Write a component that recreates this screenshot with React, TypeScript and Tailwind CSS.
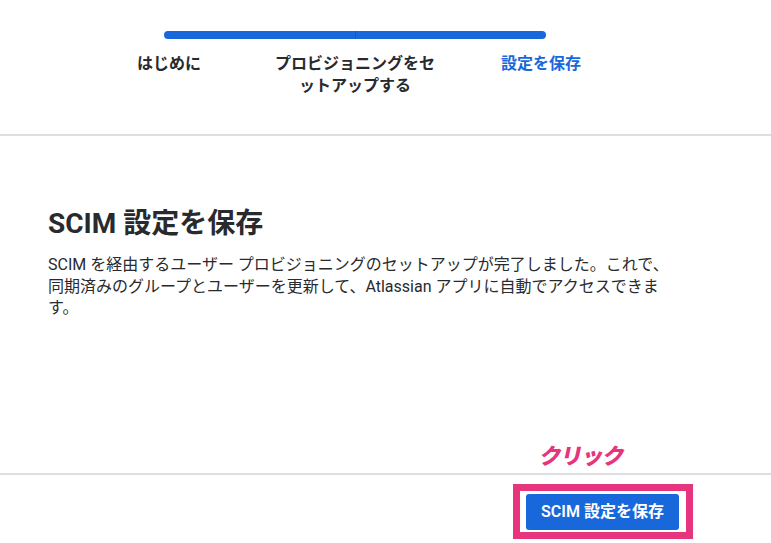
import React from 'react'

const steps = [
  { label: 'はじめに', active: false },
  { label: 'プロビジョニングをセットアップする', active: false },
  { label: '設定を保存', active: true },
]

export default function App() {
  return (
    <div
      className="relative flex h-[543px] w-full flex-col overflow-hidden bg-white text-[#292a2e]"
      style={{ fontFamily: 'Roboto, "Noto Sans CJK JP", sans-serif' }}
    >
      {/* Stepper */}
      <div className="h-[134px] shrink-0 pt-[31px]">
        <div className="ml-[76px] w-[558px]">
          <div className="flex h-2 px-[88px]">
            <div className="h-2 flex-1 rounded-l-full bg-[#1868db]" />
            <div className="h-2 w-px bg-[#1558c0]" />
            <div className="h-2 flex-1 rounded-r-full bg-[#1868db]" />
          </div>
          <div className="mt-[14px] grid grid-cols-3">
            {steps.map(s => (
              <div
                key={s.label}
                className={`px-[9px] text-center text-[16px] font-bold leading-[22px] ${
                  s.active ? 'text-[#1868db]' : 'text-[#292a2e]'
                }`}
              >
                {s.label}
              </div>
            ))}
          </div>
        </div>
      </div>

      <div className="h-[2px] shrink-0 bg-[#dddee1]" />

      {/* Content */}
      <div className="flex-1 pl-[48px] pt-[70px]">
        <h1 className="text-[28px] font-bold leading-[36px]">SCIM 設定を保存</h1>
        <p className="mt-[12px] w-[622px] text-[16px] leading-[21.5px]">
          SCIM を経由するユーザー プロビジョニングのセットアップが完了しました。これで、同期済みのグループとユーザーを更新して、Atlassian アプリに自動でアクセスできます。
        </p>
      </div>

      <div className="h-[2px] shrink-0 bg-[#dddee1]" />

      {/* Footer */}
      <div className="flex h-[68px] shrink-0 justify-end pr-[78px] pt-[9px]">
        <div className="h-[55px] border-[7px] border-[#e6357d] pb-[2px] pl-[6px] pr-[7px] pt-[3px]">
          <button className="h-[36px] w-[153px] rounded-[3px] bg-[#1868db] text-[16px] font-semibold text-white">
            SCIM 設定を保存
          </button>
        </div>
      </div>

      {/* annotation */}
      <span
        className="absolute left-[540px] top-[444px] -skew-x-12 text-[22px] font-black leading-[26px] tracking-[-1px] text-[#e6357d]"
      >
        クリック
      </span>
    </div>
  )
}
